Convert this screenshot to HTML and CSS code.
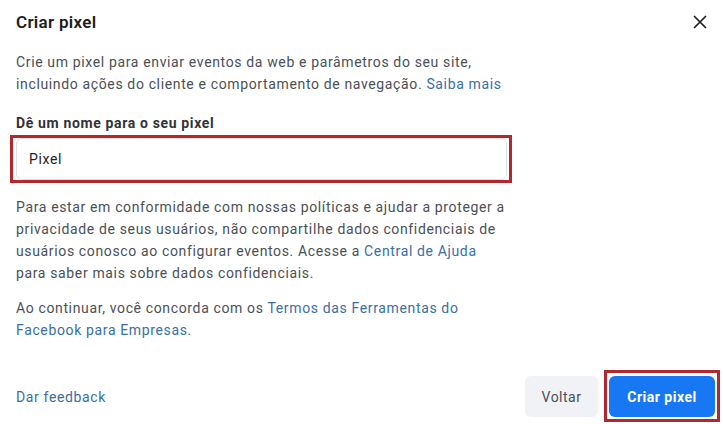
FILE: index.html
```html
<!DOCTYPE html>
<html lang="pt-BR">
<head>
<meta charset="utf-8">
<title>Criar pixel</title>
<link rel="stylesheet" href="styles.css">
</head>
<body>
<div class="dialog">
  <div class="header">
    <h1 class="title">Criar pixel</h1>
    <button class="close" aria-label="Fechar">
      <svg width="14" height="14" viewBox="0 0 14 14"><path d="M1.5 1.5 L12.5 12.5 M12.5 1.5 L1.5 12.5" stroke="#1c1e21" stroke-width="1.7" stroke-linecap="round"/></svg>
    </button>
  </div>
  <div class="content">
    <p class="intro">Crie um pixel para enviar eventos da web e parâmetros do seu site, incluindo ações do cliente e comportamento de navegação. <a href="#">Saiba mais</a></p>
    <label class="label" for="pixel-name">Dê um nome para o seu pixel</label>
    <div class="field">
      <input id="pixel-name" class="input" type="text" value="Pixel">
      <span class="highlight field-highlight"></span>
    </div>
    <p class="notice">Para estar em conformidade com nossas políticas e ajudar a proteger a privacidade de seus usuários, não compartilhe dados confidenciais de usuários conosco ao configurar eventos. Acesse a <a href="#">Central de Ajuda</a> para saber mais sobre dados confidenciais.</p>
    <p class="terms">Ao continuar, você concorda com os <a href="#">Termos das Ferramentas do Facebook para Empresas</a>.</p>
  </div>
  <div class="footer">
    <a href="#" class="feedback">Dar feedback</a>
    <div class="actions">
      <button class="btn btn-secondary">Voltar</button>
      <div class="primary-wrap">
        <button class="btn btn-primary">Criar pixel</button>
        <span class="highlight btn-highlight"></span>
      </div>
    </div>
  </div>
</div>
</body>
</html>
```

FILE: styles.css
```css
* { box-sizing: border-box; }
html, body { margin: 0; padding: 0; background: #fff; }
body {
  font-family: Roboto, "Liberation Sans", Arial, sans-serif;
  color: #4b4f56;
  font-size: 14px;
  letter-spacing: 0.64px;
  width: 723px;
  height: 424px;
  overflow: hidden;
}
.dialog {
  height: 424px;
  display: flex;
  flex-direction: column;
}
.header {
  height: 44px;
  padding: 0 16px;
  display: flex;
  align-items: center;
  justify-content: space-between;
}
.title {
  margin: 0;
  font-size: 17px;
  font-weight: 600;
  letter-spacing: 0.3px;
  color: #1c1e21;
  line-height: 20px;
}
.close {
  border: 0;
  background: transparent;
  padding: 0;
  width: 16px;
  height: 16px;
  display: flex;
  align-items: center;
  justify-content: center;
  margin-right: -1px;
}
.content {
  padding: 0 16px;
  width: 524px;
}
p { margin: 0; line-height: 22px; }
a { color: #3a6ea5; text-decoration: none; }
.intro { margin-top: 7px; }
.label {
  display: block;
  margin-top: 18px;
  font-weight: 700;
  line-height: 20px;
  color: #303338;
}
.field {
  position: relative;
  margin-top: 5px;
  width: 491px;
}
.input {
  display: block;
  width: 491px;
  height: 42px;
  border: 1px solid #dddfe2;
  border-radius: 6px;
  padding: 0 12px;
  font-family: inherit;
  font-size: 14px;
  letter-spacing: 0.64px;
  color: #1c1e21;
  outline: none;
}
.highlight {
  position: absolute;
  border: 3px solid #b2282f;
  pointer-events: none;
}
.field-highlight { left: -6px; right: -5px; top: -3px; bottom: -3px; }
.notice { margin-top: 16px; }
.terms { margin-top: 13px; }
.footer {
  margin-top: auto;
  padding: 0 8px 7px 16px;
  display: flex;
  align-items: center;
  justify-content: space-between;
}
.feedback { font-size: 14px; }
.actions {
  display: flex;
  align-items: center;
  gap: 11px;
}
.btn {
  height: 41px;
  border: 0;
  border-radius: 6px;
  font-family: inherit;
  font-size: 14px;
  letter-spacing: 0.5px;
  padding: 0;
}
.btn-secondary {
  width: 73px;
  background: #f0f2f5;
  color: #4b4f56;
  font-weight: 400;
}
.primary-wrap { position: relative; }
.btn-primary {
  display: block;
  width: 106px;
  background: #1877f2;
  color: #fff;
  font-weight: 700;
}
.btn-highlight { left: -5px; right: -5px; top: -6px; bottom: -5px; }
```
